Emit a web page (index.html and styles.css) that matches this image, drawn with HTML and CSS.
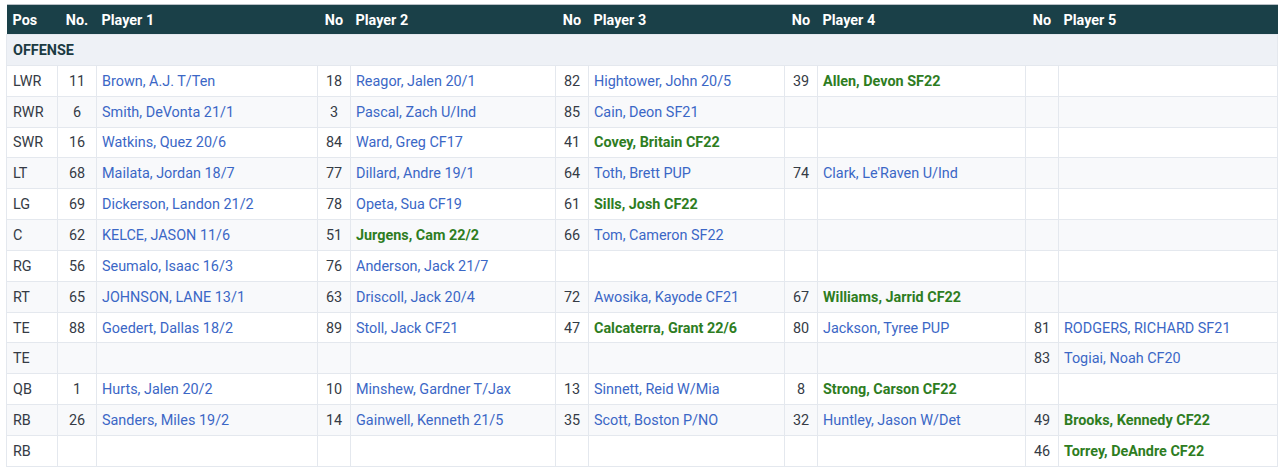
FILE: index.html
```html
<!DOCTYPE html>
<html>
<head>
<meta charset="utf-8">
<link rel="stylesheet" href="styles.css">
</head>
<body>
<div class="wrap">
<table class="depth">
<colgroup>
<col class="c-pos"><col class="c-no1"><col class="c-p1"><col class="c-no"><col class="c-p2"><col class="c-no"><col class="c-p3"><col class="c-no"><col class="c-p4"><col class="c-no"><col class="c-p5">
</colgroup>
<thead>
<tr><th class="pos">Pos</th><th class="num">No.</th><th>Player 1</th><th class="num">No</th><th>Player 2</th><th class="num">No</th><th>Player 3</th><th class="num">No</th><th>Player 4</th><th class="num">No</th><th>Player 5</th></tr>
</thead>
<tbody>
<tr class="section"><td colspan="11">OFFENSE</td></tr>
<tr><td class="pos">LWR</td><td class="num">11</td><td><a>Brown, A.J. T/Ten</a></td><td class="num">18</td><td><a>Reagor, Jalen 20/1</a></td><td class="num">82</td><td><a>Hightower, John 20/5</a></td><td class="num">39</td><td><a class="new">Allen, Devon SF22</a></td><td class="num"></td><td></td></tr>
<tr><td class="pos">RWR</td><td class="num">6</td><td><a>Smith, DeVonta 21/1</a></td><td class="num">3</td><td><a>Pascal, Zach U/Ind</a></td><td class="num">85</td><td><a>Cain, Deon SF21</a></td><td class="num"></td><td></td><td class="num"></td><td></td></tr>
<tr><td class="pos">SWR</td><td class="num">16</td><td><a>Watkins, Quez 20/6</a></td><td class="num">84</td><td><a>Ward, Greg CF17</a></td><td class="num">41</td><td><a class="new">Covey, Britain CF22</a></td><td class="num"></td><td></td><td class="num"></td><td></td></tr>
<tr><td class="pos">LT</td><td class="num">68</td><td><a>Mailata, Jordan 18/7</a></td><td class="num">77</td><td><a>Dillard, Andre 19/1</a></td><td class="num">64</td><td><a>Toth, Brett PUP</a></td><td class="num">74</td><td><a>Clark, Le'Raven U/Ind</a></td><td class="num"></td><td></td></tr>
<tr><td class="pos">LG</td><td class="num">69</td><td><a>Dickerson, Landon 21/2</a></td><td class="num">78</td><td><a>Opeta, Sua CF19</a></td><td class="num">61</td><td><a class="new">Sills, Josh CF22</a></td><td class="num"></td><td></td><td class="num"></td><td></td></tr>
<tr><td class="pos">C</td><td class="num">62</td><td><a>KELCE, JASON 11/6</a></td><td class="num">51</td><td><a class="new">Jurgens, Cam 22/2</a></td><td class="num">66</td><td><a>Tom, Cameron SF22</a></td><td class="num"></td><td></td><td class="num"></td><td></td></tr>
<tr><td class="pos">RG</td><td class="num">56</td><td><a>Seumalo, Isaac 16/3</a></td><td class="num">76</td><td><a>Anderson, Jack 21/7</a></td><td class="num"></td><td></td><td class="num"></td><td></td><td class="num"></td><td></td></tr>
<tr><td class="pos">RT</td><td class="num">65</td><td><a>JOHNSON, LANE 13/1</a></td><td class="num">63</td><td><a>Driscoll, Jack 20/4</a></td><td class="num">72</td><td><a>Awosika, Kayode CF21</a></td><td class="num">67</td><td><a class="new">Williams, Jarrid CF22</a></td><td class="num"></td><td></td></tr>
<tr><td class="pos">TE</td><td class="num">88</td><td><a>Goedert, Dallas 18/2</a></td><td class="num">89</td><td><a>Stoll, Jack CF21</a></td><td class="num">47</td><td><a class="new">Calcaterra, Grant 22/6</a></td><td class="num">80</td><td><a>Jackson, Tyree PUP</a></td><td class="num">81</td><td><a>RODGERS, RICHARD SF21</a></td></tr>
<tr><td class="pos">TE</td><td class="num"></td><td></td><td class="num"></td><td></td><td class="num"></td><td></td><td class="num"></td><td></td><td class="num">83</td><td><a>Togiai, Noah CF20</a></td></tr>
<tr><td class="pos">QB</td><td class="num">1</td><td><a>Hurts, Jalen 20/2</a></td><td class="num">10</td><td><a>Minshew, Gardner T/Jax</a></td><td class="num">13</td><td><a>Sinnett, Reid W/Mia</a></td><td class="num">8</td><td><a class="new">Strong, Carson CF22</a></td><td class="num"></td><td></td></tr>
<tr><td class="pos">RB</td><td class="num">26</td><td><a>Sanders, Miles 19/2</a></td><td class="num">14</td><td><a>Gainwell, Kenneth 21/5</a></td><td class="num">35</td><td><a>Scott, Boston P/NO</a></td><td class="num">32</td><td><a>Huntley, Jason W/Det</a></td><td class="num">49</td><td><a class="new">Brooks, Kennedy CF22</a></td></tr>
<tr><td class="pos">RB</td><td class="num"></td><td></td><td class="num"></td><td></td><td class="num"></td><td></td><td class="num"></td><td></td><td class="num">46</td><td><a class="new">Torrey, DeAndre CF22</a></td></tr>
</tbody>
</table>
</div>
</body>
</html>
```

FILE: styles.css
```css
html, body {
  margin: 0;
  padding: 0;
  background: #ffffff;
}

.wrap {
  padding: 4px 3px 0 6px;
}

.depth {
  width: 1271px;
  border-collapse: collapse;
  table-layout: fixed;
  font-family: Roboto, "Liberation Sans", Arial, sans-serif;
  font-size: 14.4px;
  color: #353b45;
  border-top: 1px solid #b9c0c6;
}

.c-pos { width: 51px; }
.c-no1 { width: 39px; }
.c-p1 { width: 221px; }
.c-no { width: 33px; }
.c-p2 { width: 205px; }
.c-p3 { width: 196px; }
.c-p4 { width: 208px; }
.c-p5 { width: 219px; }

.depth th {
  background: #1a4048;
  color: #ffffff;
  font-weight: 700;
  text-align: left;
  height: 27px;
  padding: 2px 5px 0;
  border: 0;
  line-height: 16px;
}

.depth td {
  height: 27.85px;
  padding: 2px 5px 0;
  border: 1px solid #e4e8ee;
  line-height: 16px;
  white-space: nowrap;
  overflow: hidden;
}

.depth .pos {
  padding-left: 6px;
}

.depth .num {
  text-align: center;
  padding-left: 0;
  padding-right: 0;
}

.depth tbody tr:nth-child(odd) td {
  background: #f8f9fb;
}

.depth tbody tr:nth-child(even) td {
  background: #ffffff;
}

.depth tbody tr.section td {
  background: #eef1f6;
  font-weight: 700;
  color: #1b3a42;
  padding-left: 6px;
}

.depth a {
  color: #3b67c6;
  text-decoration: none;
}

.depth a.new {
  color: #2e7d1f;
  font-weight: 700;
}
```
